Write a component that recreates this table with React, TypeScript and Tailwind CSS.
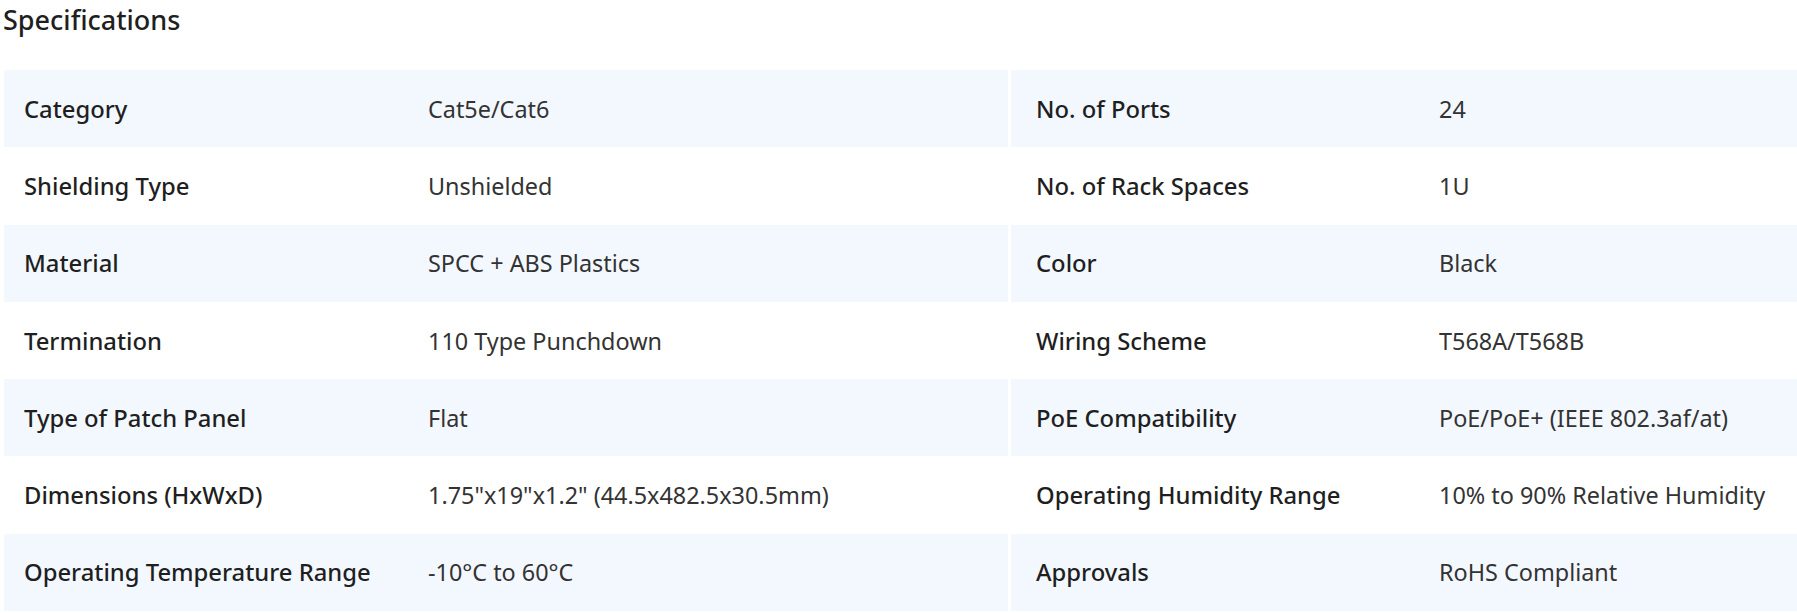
const left: [string, string][] = [
  ['Category', 'Cat5e/Cat6'],
  ['Shielding Type', 'Unshielded'],
  ['Material', 'SPCC + ABS Plastics'],
  ['Termination', '110 Type Punchdown'],
  ['Type of Patch Panel', 'Flat'],
  ['Dimensions (HxWxD)', '1.75"x19"x1.2" (44.5x482.5x30.5mm)'],
  ['Operating Temperature Range', '-10°C to 60°C'],
]

const right: [string, string][] = [
  ['No. of Ports', '24'],
  ['No. of Rack Spaces', '1U'],
  ['Color', 'Black'],
  ['Wiring Scheme', 'T568A/T568B'],
  ['PoE Compatibility', 'PoE/PoE+ (IEEE 802.3af/at)'],
  ['Operating Humidity Range', '10% to 90% Relative Humidity'],
  ['Approvals', 'RoHS Compliant'],
]

function SpecColumn({ rows, side }: { rows: [string, string][]; side: 'l' | 'r' }) {
  return (
    <div className="flex flex-col">
      {rows.map(([label, value], i) => (
        <div
          key={label}
          className={`flex items-center h-[77.3px] ${i % 2 === 0 ? 'bg-[#f3f8ff]' : 'bg-white'}`}
        >
          <div
            className={`shrink-0 font-medium text-[23.8px] text-[#1f1f1f] ${
              side === 'l' ? 'w-[424px] pl-[20px]' : 'w-[428px] pl-[25px]'
            }`}
          >
            {label}
          </div>
          <div className="text-[23.4px] text-[#333333]">{value}</div>
        </div>
      ))}
    </div>
  )
}

export default function App() {
  return (
    <div className="bg-white w-[1797px] h-[613px] overflow-hidden font-['Noto_Sans',sans-serif] leading-[32px]">
      <h2 className="pl-[3px] pt-[2px] text-[27px] font-medium text-[#1f1f1f] leading-[36px]">
        Specifications
      </h2>
      <div className="mt-[32px] pl-[4px] grid grid-cols-[1004px_1fr] gap-x-[3px]">
        <SpecColumn rows={left} side="l" />
        <SpecColumn rows={right} side="r" />
      </div>
    </div>
  )
}
